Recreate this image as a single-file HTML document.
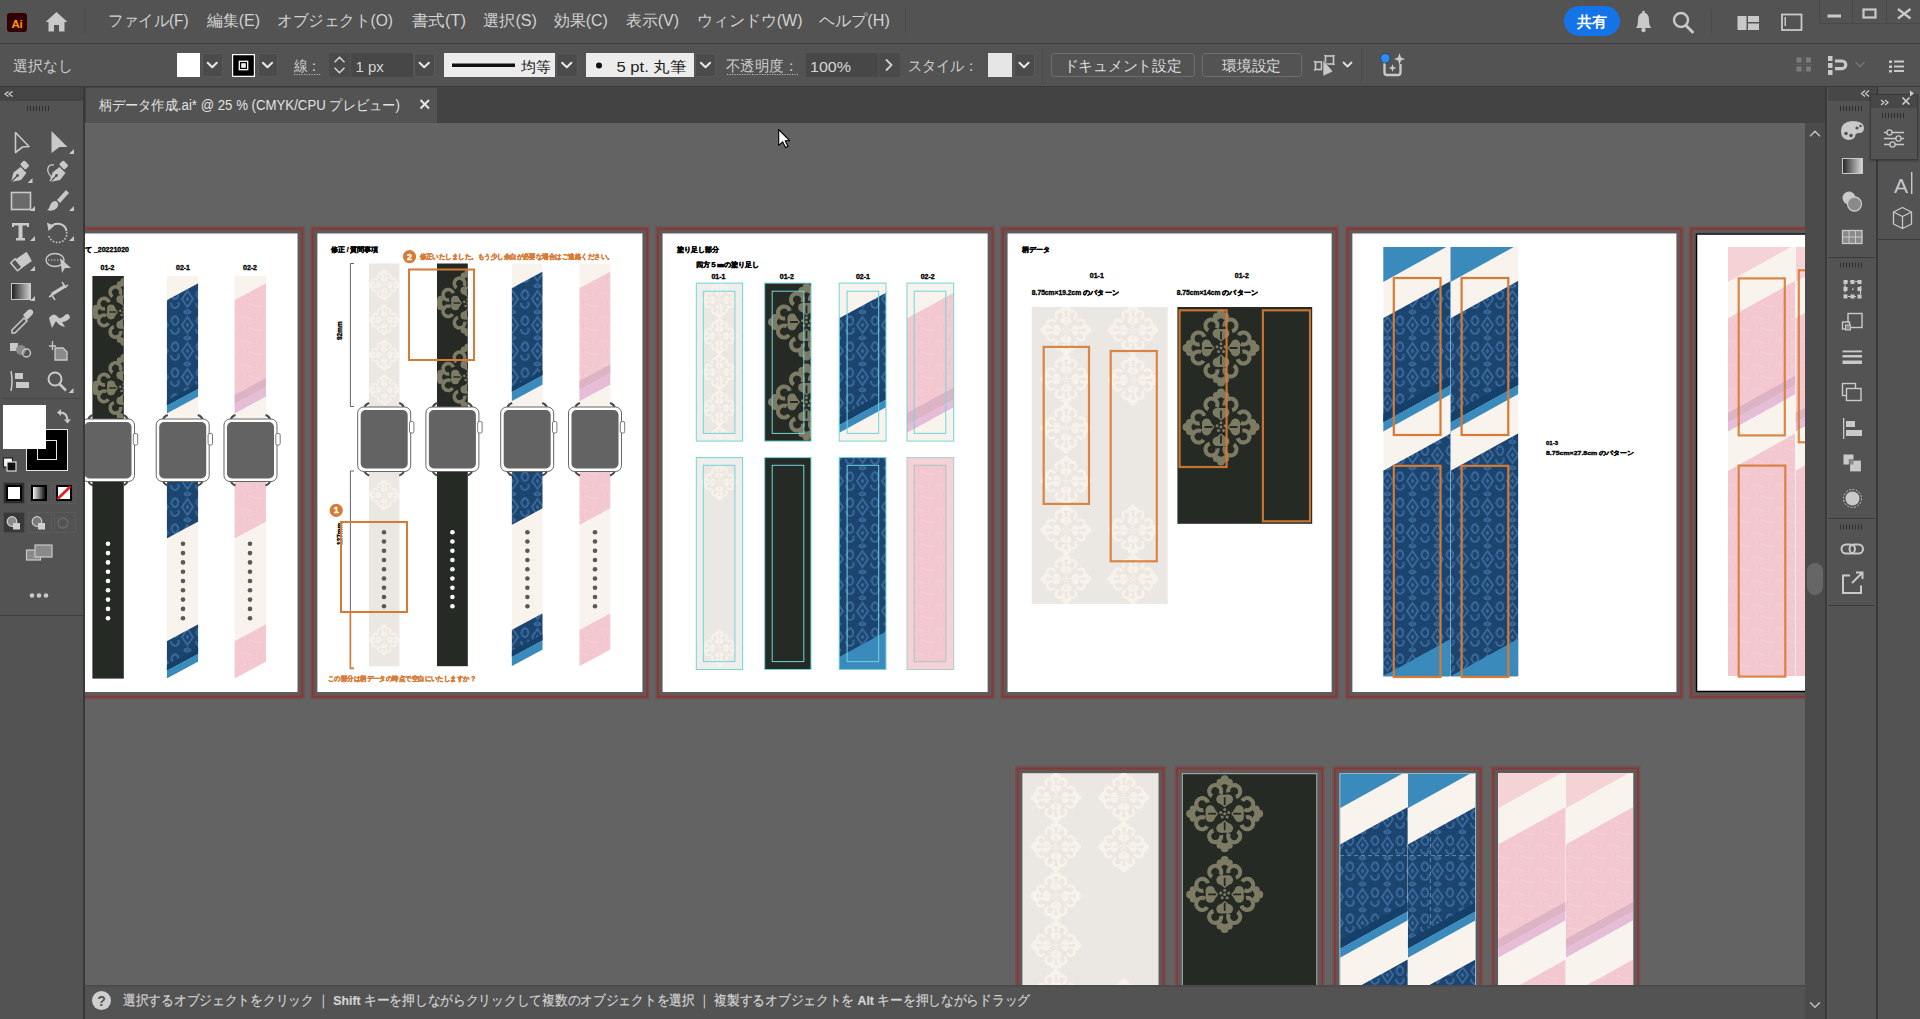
<!DOCTYPE html>
<html><head><meta charset="utf-8">
<style>
*{margin:0;padding:0;box-sizing:border-box}
html,body{width:1920px;height:1019px;overflow:hidden;background:#535353;font-family:"Liberation Sans",sans-serif}
.a{position:absolute}
.t{white-space:nowrap;line-height:1}
svg{overflow:hidden}
</style></head><body>
<div class="a" style="left:0px;top:0px;width:1920px;height:1019px;background:#535353;"></div>
<div class="a" style="left:0px;top:43px;width:1920px;height:1px;background:#3f3f3f;"></div>
<div class="a" style="left:0px;top:86px;width:1920px;height:1px;background:#3a3a3a;"></div>
<div class="a" style="left:85px;top:87px;width:1740px;height:36px;background:#434343;"></div>
<div class="a" style="left:86px;top:88px;width:351px;height:35px;background:#535353;"></div>
<div class="a" style="left:0px;top:87px;width:83px;height:14px;background:#454545;"></div>
<div class="a" style="left:0px;top:101px;width:83px;height:918px;background:#535353;"></div>
<div class="a" style="left:83px;top:87px;width:2px;height:932px;background:#393939;"></div>
<div class="a" style="left:85px;top:123px;width:1720px;height:862px;background:#636363;"></div>
<div class="a" style="left:1805px;top:123px;width:20px;height:896px;background:#4b4b4b;"></div>
<div class="a" style="left:1807px;top:563px;width:16px;height:32px;background:#666666;border-radius:8px"></div>
<div class="a" style="left:85px;top:985px;width:1720px;height:34px;background:#535353;"></div>
<div class="a" style="left:85px;top:985px;width:1720px;height:2px;background:#4b4b4b;"></div>
<div class="a" style="left:1825px;top:87px;width:2px;height:932px;background:#393939;"></div>
<div class="a" style="left:1827px;top:87px;width:1px;height:932px;background:#5a5a5a;"></div>
<div class="a" style="left:1828px;top:87px;width:47px;height:14px;background:#474747;"></div>
<div class="a" style="left:1828px;top:101px;width:47px;height:918px;background:#535353;"></div>
<div class="a" style="left:1875.5px;top:87px;width:2px;height:932px;background:#393939;"></div>
<div class="a" style="left:1878px;top:87px;width:42px;height:932px;background:#535353;"></div>
<svg class="a" style="left:85px;top:123px" width="1720" height="862" viewBox="85 123 1720 862" font-family="Liberation Sans, sans-serif"><defs>
<pattern id="navyPat" width="25" height="26" patternUnits="userSpaceOnUse"><rect width="25" height="26" fill="#1b446f"/><g fill="none" stroke="#38679a" stroke-width="2"><path d="M12.5 5 L18 13 L12.5 21 L7 13Z"/><path d="M0 4 q4 2 3 6 q-1 3 -3 3 M25 4 q-4 2 -3 6 q1 3 3 3"/><path d="M0 22 q4 -1 4 -5 M25 22 q-4 -1 -4 -5"/><path d="M9 0 q3 3 7 0 M9 26 q3 -3 7 0"/></g><path d="M12.5 10.5 L14.5 13 L12.5 15.5 L10.5 13Z" fill="#38679a"/><circle cx="3.5" cy="17" r="1.6" fill="#2f5d8c"/><circle cx="21.5" cy="9" r="1.6" fill="#2f5d8c"/><rect x="11.5" y="23" width="2" height="2" fill="#2f5d8c"/></pattern>
<pattern id="pinkPat" width="24" height="24" patternUnits="userSpaceOnUse"><rect width="24" height="24" fill="#f3c8d0"/><path d="M2 6 q4 -3 8 0 t8 1 M4 17 q5 -3 9 0 t9 0" fill="none" stroke="#f6d2d8" stroke-width="1"/><path d="M14 2 q-2 4 1 7 M7 12 q2 3 -1 6" fill="none" stroke="#eec0c9" stroke-width="0.9"/></pattern>
<g id="oliveM" fill="#7d7b63"><g transform="scale(1.000)"><g transform="rotate(0)"><circle cx="0" cy="-34.5" r="4"/><circle cx="-4.6" cy="-31.5" r="3.5"/><circle cx="4.6" cy="-31.5" r="3.5"/><rect x="-4.6" y="-33" width="9.2" height="3.5"/></g><g transform="rotate(90)"><circle cx="0" cy="-34.5" r="4"/><circle cx="-4.6" cy="-31.5" r="3.5"/><circle cx="4.6" cy="-31.5" r="3.5"/><rect x="-4.6" y="-33" width="9.2" height="3.5"/></g><g transform="rotate(180)"><circle cx="0" cy="-34.5" r="4"/><circle cx="-4.6" cy="-31.5" r="3.5"/><circle cx="4.6" cy="-31.5" r="3.5"/><rect x="-4.6" y="-33" width="9.2" height="3.5"/></g><g transform="rotate(270)"><circle cx="0" cy="-34.5" r="4"/><circle cx="-4.6" cy="-31.5" r="3.5"/><circle cx="4.6" cy="-31.5" r="3.5"/><rect x="-4.6" y="-33" width="9.2" height="3.5"/></g><g transform="rotate(0)"><circle cx="-3.8" cy="-14.5" r="4.6"/><circle cx="3.8" cy="-14.5" r="4.6"/><path d="M-8 -12.5 L0 -6.5 L8 -12.5Z"/><rect x="-3.8" y="-19" width="7.6" height="4"/><path d="M-0.9 -16.5 h1.8 v8 h-1.8z" fill="#252a25"/></g><g transform="rotate(90)"><circle cx="-3.8" cy="-14.5" r="4.6"/><circle cx="3.8" cy="-14.5" r="4.6"/><path d="M-8 -12.5 L0 -6.5 L8 -12.5Z"/><rect x="-3.8" y="-19" width="7.6" height="4"/><path d="M-0.9 -16.5 h1.8 v8 h-1.8z" fill="#252a25"/></g><g transform="rotate(180)"><circle cx="-3.8" cy="-14.5" r="4.6"/><circle cx="3.8" cy="-14.5" r="4.6"/><path d="M-8 -12.5 L0 -6.5 L8 -12.5Z"/><rect x="-3.8" y="-19" width="7.6" height="4"/><path d="M-0.9 -16.5 h1.8 v8 h-1.8z" fill="#252a25"/></g><g transform="rotate(270)"><circle cx="-3.8" cy="-14.5" r="4.6"/><circle cx="3.8" cy="-14.5" r="4.6"/><path d="M-8 -12.5 L0 -6.5 L8 -12.5Z"/><rect x="-3.8" y="-19" width="7.6" height="4"/><path d="M-0.9 -16.5 h1.8 v8 h-1.8z" fill="#252a25"/></g><g transform="rotate(0)"><circle cx="-9.5" cy="-22.5" r="6" fill="none" stroke="#7d7b63" stroke-width="4.2" stroke-dasharray="27 10.7" transform="rotate(-236.9 -9.5 -22.5)"/></g><g transform="rotate(0)"><circle cx="9.5" cy="-22.5" r="6" fill="none" stroke="#7d7b63" stroke-width="4.2" stroke-dasharray="27 10.7" transform="rotate(-191.1 9.5 -22.5)"/></g><g transform="rotate(90)"><circle cx="-9.5" cy="-22.5" r="6" fill="none" stroke="#7d7b63" stroke-width="4.2" stroke-dasharray="27 10.7" transform="rotate(-236.9 -9.5 -22.5)"/></g><g transform="rotate(90)"><circle cx="9.5" cy="-22.5" r="6" fill="none" stroke="#7d7b63" stroke-width="4.2" stroke-dasharray="27 10.7" transform="rotate(-191.1 9.5 -22.5)"/></g><g transform="rotate(180)"><circle cx="-9.5" cy="-22.5" r="6" fill="none" stroke="#7d7b63" stroke-width="4.2" stroke-dasharray="27 10.7" transform="rotate(-236.9 -9.5 -22.5)"/></g><g transform="rotate(180)"><circle cx="9.5" cy="-22.5" r="6" fill="none" stroke="#7d7b63" stroke-width="4.2" stroke-dasharray="27 10.7" transform="rotate(-191.1 9.5 -22.5)"/></g><g transform="rotate(270)"><circle cx="-9.5" cy="-22.5" r="6" fill="none" stroke="#7d7b63" stroke-width="4.2" stroke-dasharray="27 10.7" transform="rotate(-236.9 -9.5 -22.5)"/></g><g transform="rotate(270)"><circle cx="9.5" cy="-22.5" r="6" fill="none" stroke="#7d7b63" stroke-width="4.2" stroke-dasharray="27 10.7" transform="rotate(-191.1 9.5 -22.5)"/></g><circle cx="0.0" cy="-4.2" r="1.5"/><circle cx="4.0" cy="-1.3" r="1.5"/><circle cx="2.5" cy="3.4" r="1.5"/><circle cx="-2.5" cy="3.4" r="1.5"/><circle cx="-4.0" cy="-1.3" r="1.5"/><circle cx="0" cy="0" r="1.5"/></g></g>
<g id="creamM" fill="#f8f3ea"><g transform="scale(0.660)"><g transform="rotate(0)"><circle cx="0" cy="-34.5" r="4"/><circle cx="-4.6" cy="-31.5" r="3.5"/><circle cx="4.6" cy="-31.5" r="3.5"/><rect x="-4.6" y="-33" width="9.2" height="3.5"/></g><g transform="rotate(90)"><circle cx="0" cy="-34.5" r="4"/><circle cx="-4.6" cy="-31.5" r="3.5"/><circle cx="4.6" cy="-31.5" r="3.5"/><rect x="-4.6" y="-33" width="9.2" height="3.5"/></g><g transform="rotate(180)"><circle cx="0" cy="-34.5" r="4"/><circle cx="-4.6" cy="-31.5" r="3.5"/><circle cx="4.6" cy="-31.5" r="3.5"/><rect x="-4.6" y="-33" width="9.2" height="3.5"/></g><g transform="rotate(270)"><circle cx="0" cy="-34.5" r="4"/><circle cx="-4.6" cy="-31.5" r="3.5"/><circle cx="4.6" cy="-31.5" r="3.5"/><rect x="-4.6" y="-33" width="9.2" height="3.5"/></g><g transform="rotate(0)"><circle cx="-3.8" cy="-14.5" r="4.6"/><circle cx="3.8" cy="-14.5" r="4.6"/><path d="M-8 -12.5 L0 -6.5 L8 -12.5Z"/><rect x="-3.8" y="-19" width="7.6" height="4"/><path d="M-0.9 -16.5 h1.8 v8 h-1.8z" fill="#ebe7e2"/></g><g transform="rotate(90)"><circle cx="-3.8" cy="-14.5" r="4.6"/><circle cx="3.8" cy="-14.5" r="4.6"/><path d="M-8 -12.5 L0 -6.5 L8 -12.5Z"/><rect x="-3.8" y="-19" width="7.6" height="4"/><path d="M-0.9 -16.5 h1.8 v8 h-1.8z" fill="#ebe7e2"/></g><g transform="rotate(180)"><circle cx="-3.8" cy="-14.5" r="4.6"/><circle cx="3.8" cy="-14.5" r="4.6"/><path d="M-8 -12.5 L0 -6.5 L8 -12.5Z"/><rect x="-3.8" y="-19" width="7.6" height="4"/><path d="M-0.9 -16.5 h1.8 v8 h-1.8z" fill="#ebe7e2"/></g><g transform="rotate(270)"><circle cx="-3.8" cy="-14.5" r="4.6"/><circle cx="3.8" cy="-14.5" r="4.6"/><path d="M-8 -12.5 L0 -6.5 L8 -12.5Z"/><rect x="-3.8" y="-19" width="7.6" height="4"/><path d="M-0.9 -16.5 h1.8 v8 h-1.8z" fill="#ebe7e2"/></g><g transform="rotate(0)"><circle cx="-9.5" cy="-22.5" r="6" fill="none" stroke="#f8f3ea" stroke-width="4.2" stroke-dasharray="27 10.7" transform="rotate(-236.9 -9.5 -22.5)"/></g><g transform="rotate(0)"><circle cx="9.5" cy="-22.5" r="6" fill="none" stroke="#f8f3ea" stroke-width="4.2" stroke-dasharray="27 10.7" transform="rotate(-191.1 9.5 -22.5)"/></g><g transform="rotate(90)"><circle cx="-9.5" cy="-22.5" r="6" fill="none" stroke="#f8f3ea" stroke-width="4.2" stroke-dasharray="27 10.7" transform="rotate(-236.9 -9.5 -22.5)"/></g><g transform="rotate(90)"><circle cx="9.5" cy="-22.5" r="6" fill="none" stroke="#f8f3ea" stroke-width="4.2" stroke-dasharray="27 10.7" transform="rotate(-191.1 9.5 -22.5)"/></g><g transform="rotate(180)"><circle cx="-9.5" cy="-22.5" r="6" fill="none" stroke="#f8f3ea" stroke-width="4.2" stroke-dasharray="27 10.7" transform="rotate(-236.9 -9.5 -22.5)"/></g><g transform="rotate(180)"><circle cx="9.5" cy="-22.5" r="6" fill="none" stroke="#f8f3ea" stroke-width="4.2" stroke-dasharray="27 10.7" transform="rotate(-191.1 9.5 -22.5)"/></g><g transform="rotate(270)"><circle cx="-9.5" cy="-22.5" r="6" fill="none" stroke="#f8f3ea" stroke-width="4.2" stroke-dasharray="27 10.7" transform="rotate(-236.9 -9.5 -22.5)"/></g><g transform="rotate(270)"><circle cx="9.5" cy="-22.5" r="6" fill="none" stroke="#f8f3ea" stroke-width="4.2" stroke-dasharray="27 10.7" transform="rotate(-191.1 9.5 -22.5)"/></g><circle cx="0.0" cy="-4.2" r="1.5"/><circle cx="4.0" cy="-1.3" r="1.5"/><circle cx="2.5" cy="3.4" r="1.5"/><circle cx="-2.5" cy="3.4" r="1.5"/><circle cx="-4.0" cy="-1.3" r="1.5"/><circle cx="0" cy="0" r="1.5"/></g></g>
</defs>
<rect x="-31.8" y="228.7" width="334.1" height="468.1" fill="none" stroke="#7a4646" stroke-width="5" opacity="0.55"/>
<rect x="-31.8" y="228.7" width="334.1" height="468.1" fill="none" stroke="#863838" stroke-width="1.8"/>
<rect x="-28.6" y="231.9" width="327.7" height="461.7" fill="none" stroke="#585858" stroke-width="2.2" opacity="0.7"/>
<rect x="-27.0" y="233.5" width="324.5" height="458.5" fill="#ffffff"/>
<rect x="312.6" y="228.7" width="334.6" height="468.1" fill="none" stroke="#7a4646" stroke-width="5" opacity="0.55"/>
<rect x="312.6" y="228.7" width="334.6" height="468.1" fill="none" stroke="#863838" stroke-width="1.8"/>
<rect x="315.8" y="231.9" width="328.2" height="461.7" fill="none" stroke="#585858" stroke-width="2.2" opacity="0.7"/>
<rect x="317.4" y="233.5" width="325.0" height="458.5" fill="#ffffff"/>
<rect x="657.8" y="228.7" width="334.6" height="468.1" fill="none" stroke="#7a4646" stroke-width="5" opacity="0.55"/>
<rect x="657.8" y="228.7" width="334.6" height="468.1" fill="none" stroke="#863838" stroke-width="1.8"/>
<rect x="661.0" y="231.9" width="328.2" height="461.7" fill="none" stroke="#585858" stroke-width="2.2" opacity="0.7"/>
<rect x="662.6" y="233.5" width="325.0" height="458.5" fill="#ffffff"/>
<rect x="1002.8" y="228.7" width="333.6" height="468.1" fill="none" stroke="#7a4646" stroke-width="5" opacity="0.55"/>
<rect x="1002.8" y="228.7" width="333.6" height="468.1" fill="none" stroke="#863838" stroke-width="1.8"/>
<rect x="1006.0" y="231.9" width="327.2" height="461.7" fill="none" stroke="#585858" stroke-width="2.2" opacity="0.7"/>
<rect x="1007.6" y="233.5" width="324.0" height="458.5" fill="#ffffff"/>
<rect x="1347.6" y="228.7" width="333.6" height="468.1" fill="none" stroke="#7a4646" stroke-width="5" opacity="0.55"/>
<rect x="1347.6" y="228.7" width="333.6" height="468.1" fill="none" stroke="#863838" stroke-width="1.8"/>
<rect x="1350.8" y="231.9" width="327.2" height="461.7" fill="none" stroke="#585858" stroke-width="2.2" opacity="0.7"/>
<rect x="1352.4" y="233.5" width="324.0" height="458.5" fill="#ffffff"/>
<rect x="1691.2" y="228.7" width="333.6" height="468.1" fill="none" stroke="#7a4646" stroke-width="5" opacity="0.55"/>
<rect x="1691.2" y="228.7" width="333.6" height="468.1" fill="none" stroke="#863838" stroke-width="1.8"/>
<rect x="1694.4" y="231.9" width="327.2" height="461.7" fill="none" stroke="#585858" stroke-width="2.2" opacity="0.7"/>
<rect x="1696.0" y="233.5" width="324.0" height="458.5" fill="#ffffff"/>
<rect x="1696.5" y="234.0" width="323.0" height="457.5" fill="none" stroke="#000" stroke-width="1.5"/>
<text x="85.0" y="252.0" font-size="7" fill="#000" text-anchor="start" font-weight="bold" stroke="#000" stroke-width="0.35">て _20221020</text>
<text x="107.5" y="270.0" font-size="7" fill="#000" text-anchor="middle" font-weight="bold" stroke="#000" stroke-width="0.35">01-2</text>
<text x="183.0" y="270.0" font-size="7" fill="#000" text-anchor="middle" font-weight="bold" stroke="#000" stroke-width="0.35">02-1</text>
<text x="250.0" y="270.0" font-size="7" fill="#000" text-anchor="middle" font-weight="bold" stroke="#000" stroke-width="0.35">02-2</text>
<rect x="92.4" y="276.0" width="31.4" height="402.6" fill="#252a25"/>
<clipPath id="s1c"><rect x="92.4" y="276" width="31.4" height="142"/></clipPath><g clip-path="url(#s1c)">
<use href="#oliveM" transform="translate(123.8 312.0) scale(0.880)"/>
<use href="#oliveM" transform="translate(123.8 388.0) scale(0.880)"/>
</g>
<circle cx="108.0" cy="543.8" r="2.3" fill="#ffffff"/>
<circle cx="108.0" cy="553.1" r="2.3" fill="#ffffff"/>
<circle cx="108.0" cy="562.4" r="2.3" fill="#ffffff"/>
<circle cx="108.0" cy="571.7" r="2.3" fill="#ffffff"/>
<circle cx="108.0" cy="581.0" r="2.3" fill="#ffffff"/>
<circle cx="108.0" cy="590.3" r="2.3" fill="#ffffff"/>
<circle cx="108.0" cy="599.6" r="2.3" fill="#ffffff"/>
<circle cx="108.0" cy="608.9" r="2.3" fill="#ffffff"/>
<circle cx="108.0" cy="618.2" r="2.3" fill="#ffffff"/>
<clipPath id="c1"><polygon points="166.7,276.0 198.3,276.0 198.3,661.6 166.7,678.6"/></clipPath>
<g clip-path="url(#c1)">
<rect x="166.7" y="276.0" width="31.6" height="402.6" fill="#f8f4ed"/>
<polygon points="166.7,300.3 198.3,283.3 198.3,388.7 166.7,405.7" fill="url(#navyPat)"/>
<polygon points="166.7,400.7 198.3,383.7 198.3,388.7 166.7,405.7" fill="#15406a"/>
<polygon points="166.7,405.7 198.3,388.7 198.3,396.6 166.7,413.6" fill="#3a8abb"/>
<polygon points="166.7,478.0 198.3,461.0 198.3,521.6 166.7,538.6" fill="url(#navyPat)"/>
<polygon points="166.7,641.3 198.3,624.3 198.3,653.7 166.7,670.7" fill="url(#navyPat)"/>
<polygon points="166.7,664.7 198.3,647.7 198.3,653.7 166.7,670.7" fill="#15406a"/>
<polygon points="166.7,670.7 198.3,653.7 198.3,701.6 166.7,718.6" fill="#3a8abb"/>
</g>
<clipPath id="c2"><polygon points="234.4,276.0 266.0,276.0 266.0,661.6 234.4,678.6"/></clipPath>
<g clip-path="url(#c2)">
<rect x="234.4" y="276.0" width="31.6" height="402.6" fill="#f8f4ed"/>
<polygon points="234.4,300.3 266.0,283.3 266.0,387.0 234.4,404.0" fill="url(#pinkPat)"/>
<polygon points="234.4,395.0 266.0,378.0 266.0,387.0 234.4,404.0" fill="#dcb4c6"/>
<polygon points="234.4,404.0 266.0,387.0 266.0,396.6 234.4,413.6" fill="#e6bdd6"/>
<polygon points="234.4,478.0 266.0,461.0 266.0,521.6 234.4,538.6" fill="url(#pinkPat)"/>
<polygon points="234.4,641.3 266.0,624.3 266.0,701.6 234.4,718.6" fill="url(#pinkPat)"/>
</g>
<circle cx="183.0" cy="543.8" r="2.3" fill="#5d5853"/>
<circle cx="183.0" cy="553.1" r="2.3" fill="#5d5853"/>
<circle cx="183.0" cy="562.4" r="2.3" fill="#5d5853"/>
<circle cx="183.0" cy="571.7" r="2.3" fill="#5d5853"/>
<circle cx="183.0" cy="581.0" r="2.3" fill="#5d5853"/>
<circle cx="183.0" cy="590.3" r="2.3" fill="#5d5853"/>
<circle cx="183.0" cy="599.6" r="2.3" fill="#5d5853"/>
<circle cx="183.0" cy="608.9" r="2.3" fill="#5d5853"/>
<circle cx="183.0" cy="618.2" r="2.3" fill="#5d5853"/>
<circle cx="250.0" cy="543.8" r="2.3" fill="#5d5853"/>
<circle cx="250.0" cy="553.1" r="2.3" fill="#5d5853"/>
<circle cx="250.0" cy="562.4" r="2.3" fill="#5d5853"/>
<circle cx="250.0" cy="571.7" r="2.3" fill="#5d5853"/>
<circle cx="250.0" cy="581.0" r="2.3" fill="#5d5853"/>
<circle cx="250.0" cy="590.3" r="2.3" fill="#5d5853"/>
<circle cx="250.0" cy="599.6" r="2.3" fill="#5d5853"/>
<circle cx="250.0" cy="608.9" r="2.3" fill="#5d5853"/>
<circle cx="250.0" cy="618.2" r="2.3" fill="#5d5853"/>
<path d="M88.0 421.0 q0.5 -4.5 5 -6 M128.0 421.0 q-0.5 -4.5 -5 -6" stroke="#4a4a4a" stroke-width="2.2" fill="none"/>
<path d="M88.0 479.5 q0.5 4.5 5 6 M128.0 479.5 q-0.5 4.5 -5 6" stroke="#4a4a4a" stroke-width="2.2" fill="none"/>
<rect x="81.5" y="419.0" width="53.0" height="62.5" rx="6" fill="#fff" stroke="#666" stroke-width="1"/>
<rect x="133.3" y="433.5" width="4.4" height="11.5" rx="1.5" fill="#fff" stroke="#6a6a6a" stroke-width="0.9"/>
<rect x="84.5" y="422.0" width="47.0" height="56.5" rx="5" fill="#636363"/>
<path d="M162.8 421.0 q0.5 -4.5 5 -6 M202.8 421.0 q-0.5 -4.5 -5 -6" stroke="#4a4a4a" stroke-width="2.2" fill="none"/>
<path d="M162.8 479.5 q0.5 4.5 5 6 M202.8 479.5 q-0.5 4.5 -5 6" stroke="#4a4a4a" stroke-width="2.2" fill="none"/>
<rect x="156.2" y="419.0" width="53.0" height="62.5" rx="6" fill="#fff" stroke="#666" stroke-width="1"/>
<rect x="208.1" y="433.5" width="4.4" height="11.5" rx="1.5" fill="#fff" stroke="#6a6a6a" stroke-width="0.9"/>
<rect x="159.2" y="422.0" width="47.0" height="56.5" rx="5" fill="#636363"/>
<path d="M230.5 421.0 q0.5 -4.5 5 -6 M270.5 421.0 q-0.5 -4.5 -5 -6" stroke="#4a4a4a" stroke-width="2.2" fill="none"/>
<path d="M230.5 479.5 q0.5 4.5 5 6 M270.5 479.5 q-0.5 4.5 -5 6" stroke="#4a4a4a" stroke-width="2.2" fill="none"/>
<rect x="224.0" y="419.0" width="53.0" height="62.5" rx="6" fill="#fff" stroke="#666" stroke-width="1"/>
<rect x="275.8" y="433.5" width="4.4" height="11.5" rx="1.5" fill="#fff" stroke="#6a6a6a" stroke-width="0.9"/>
<rect x="227.0" y="422.0" width="47.0" height="56.5" rx="5" fill="#636363"/>
<text x="331.0" y="252.0" font-size="6.5" fill="#000" text-anchor="start" font-weight="bold" stroke="#000" stroke-width="0.35">修正 / 質問事項</text>
<circle cx="409.5" cy="256.7" r="6.6" fill="#d77a35"/>
<text x="409.5" y="259.6" font-size="9" fill="#fff" text-anchor="middle" font-weight="bold" stroke="#fff" stroke-width="0.35">2</text>
<text x="419.5" y="258.5" font-size="6.6" fill="#d77a35" text-anchor="start" font-weight="bold" stroke="#d77a35" stroke-width="0.35" textLength="194" lengthAdjust="spacingAndGlyphs">修正いたしました。もう少し余白が必要な場合はご連絡ください。</text>
<path d="M354 263.5 H350.4 V406.5 H354" fill="none" stroke="#555" stroke-width="0.9"/>
<path d="M354 471 H350.4 V668.4 H354" fill="none" stroke="#555" stroke-width="0.9"/>
<path d="M350.4 612 V668.4 H354" fill="none" stroke="#d77a35" stroke-width="1.6"/>
<text x="341.5" y="340.0" font-size="6.5" fill="#000" text-anchor="start" font-weight="bold" stroke="#000" stroke-width="0.35" transform="rotate(-90 341.5 340)" text-anchor="middle">92mm</text>
<text x="341.5" y="545.0" font-size="6.5" fill="#000" text-anchor="start" font-weight="bold" stroke="#000" stroke-width="0.35" transform="rotate(-90 341.5 545)" text-anchor="middle">127mm</text>
<rect x="369.0" y="263.5" width="30.4" height="402.7" fill="#ebe7e2"/>
<clipPath id="s2a"><rect x="369" y="263.5" width="30.4" height="402.7"/></clipPath><g clip-path="url(#s2a)">
<use href="#creamM" transform="translate(384.2 285.0) scale(0.620)"/>
<use href="#creamM" transform="translate(384.2 320.0) scale(0.620)"/>
<use href="#creamM" transform="translate(384.2 355.0) scale(0.620)"/>
<use href="#creamM" transform="translate(384.2 390.0) scale(0.620)"/>
<use href="#creamM" transform="translate(384.2 495.0) scale(0.620)"/>
<use href="#creamM" transform="translate(384.2 640.0) scale(0.620)"/>
</g>
<rect x="437.0" y="263.5" width="30.8" height="402.7" fill="#252a25"/>
<clipPath id="s2b"><rect x="437" y="263.5" width="30.8" height="143"/></clipPath><g clip-path="url(#s2b)">
<use href="#oliveM" transform="translate(467.8 303.0) scale(0.870)"/>
<use href="#oliveM" transform="translate(467.8 377.0) scale(0.870)"/>
</g>
<clipPath id="c3"><polygon points="511.6,263.5 542.7,263.5 542.7,649.5 511.6,666.2"/></clipPath>
<g clip-path="url(#c3)">
<rect x="511.6" y="263.5" width="31.1" height="402.7" fill="#f8f4ed"/>
<polygon points="511.6,288.3 542.7,271.6 542.7,375.3 511.6,392.0" fill="url(#navyPat)"/>
<polygon points="511.6,387.0 542.7,370.3 542.7,375.3 511.6,392.0" fill="#15406a"/>
<polygon points="511.6,392.0 542.7,375.3 542.7,384.5 511.6,401.2" fill="#3a8abb"/>
<polygon points="511.6,468.0 542.7,451.3 542.7,508.3 511.6,525.0" fill="url(#navyPat)"/>
<polygon points="511.6,630.0 542.7,613.3 542.7,640.3 511.6,657.0" fill="url(#navyPat)"/>
<polygon points="511.6,651.0 542.7,634.3 542.7,640.3 511.6,657.0" fill="#15406a"/>
<polygon points="511.6,657.0 542.7,640.3 542.7,689.5 511.6,706.2" fill="#3a8abb"/>
</g>
<clipPath id="c4"><polygon points="579.3,263.5 610.5,263.5 610.5,649.4 579.3,666.2"/></clipPath>
<g clip-path="url(#c4)">
<rect x="579.3" y="263.5" width="31.2" height="402.7" fill="#f8f4ed"/>
<polygon points="579.3,288.3 610.5,271.5 610.5,373.2 579.3,390.0" fill="url(#pinkPat)"/>
<polygon points="579.3,381.0 610.5,364.2 610.5,373.2 579.3,390.0" fill="#dcb4c6"/>
<polygon points="579.3,390.0 610.5,373.2 610.5,384.4 579.3,401.2" fill="#e6bdd6"/>
<polygon points="579.3,468.0 610.5,451.2 610.5,508.2 579.3,525.0" fill="url(#pinkPat)"/>
<polygon points="579.3,630.0 610.5,613.2 610.5,689.4 579.3,706.2" fill="url(#pinkPat)"/>
</g>
<circle cx="384.0" cy="532.3" r="2.3" fill="#5d5853"/>
<circle cx="384.0" cy="541.5" r="2.3" fill="#5d5853"/>
<circle cx="384.0" cy="550.8" r="2.3" fill="#5d5853"/>
<circle cx="384.0" cy="560.0" r="2.3" fill="#5d5853"/>
<circle cx="384.0" cy="569.3" r="2.3" fill="#5d5853"/>
<circle cx="384.0" cy="578.5" r="2.3" fill="#5d5853"/>
<circle cx="384.0" cy="587.8" r="2.3" fill="#5d5853"/>
<circle cx="384.0" cy="597.0" r="2.3" fill="#5d5853"/>
<circle cx="384.0" cy="606.3" r="2.3" fill="#5d5853"/>
<circle cx="452.4" cy="532.3" r="2.3" fill="#ffffff"/>
<circle cx="452.4" cy="541.5" r="2.3" fill="#ffffff"/>
<circle cx="452.4" cy="550.8" r="2.3" fill="#ffffff"/>
<circle cx="452.4" cy="560.0" r="2.3" fill="#ffffff"/>
<circle cx="452.4" cy="569.3" r="2.3" fill="#ffffff"/>
<circle cx="452.4" cy="578.5" r="2.3" fill="#ffffff"/>
<circle cx="452.4" cy="587.8" r="2.3" fill="#ffffff"/>
<circle cx="452.4" cy="597.0" r="2.3" fill="#ffffff"/>
<circle cx="452.4" cy="606.3" r="2.3" fill="#ffffff"/>
<circle cx="527.4" cy="532.3" r="2.3" fill="#5d5853"/>
<circle cx="527.4" cy="541.5" r="2.3" fill="#5d5853"/>
<circle cx="527.4" cy="550.8" r="2.3" fill="#5d5853"/>
<circle cx="527.4" cy="560.0" r="2.3" fill="#5d5853"/>
<circle cx="527.4" cy="569.3" r="2.3" fill="#5d5853"/>
<circle cx="527.4" cy="578.5" r="2.3" fill="#5d5853"/>
<circle cx="527.4" cy="587.8" r="2.3" fill="#5d5853"/>
<circle cx="527.4" cy="597.0" r="2.3" fill="#5d5853"/>
<circle cx="527.4" cy="606.3" r="2.3" fill="#5d5853"/>
<circle cx="595.0" cy="532.3" r="2.3" fill="#5d5853"/>
<circle cx="595.0" cy="541.5" r="2.3" fill="#5d5853"/>
<circle cx="595.0" cy="550.8" r="2.3" fill="#5d5853"/>
<circle cx="595.0" cy="560.0" r="2.3" fill="#5d5853"/>
<circle cx="595.0" cy="569.3" r="2.3" fill="#5d5853"/>
<circle cx="595.0" cy="578.5" r="2.3" fill="#5d5853"/>
<circle cx="595.0" cy="587.8" r="2.3" fill="#5d5853"/>
<circle cx="595.0" cy="597.0" r="2.3" fill="#5d5853"/>
<circle cx="595.0" cy="606.3" r="2.3" fill="#5d5853"/>
<path d="M364.2 409.0 q0.5 -4.5 5 -6 M404.2 409.0 q-0.5 -4.5 -5 -6" stroke="#4a4a4a" stroke-width="2.2" fill="none"/>
<path d="M364.2 469.5 q0.5 4.5 5 6 M404.2 469.5 q-0.5 4.5 -5 6" stroke="#4a4a4a" stroke-width="2.2" fill="none"/>
<rect x="357.7" y="407.0" width="53.0" height="64.5" rx="6" fill="#fff" stroke="#666" stroke-width="1"/>
<rect x="409.5" y="421.5" width="4.4" height="11.5" rx="1.5" fill="#fff" stroke="#6a6a6a" stroke-width="0.9"/>
<rect x="360.7" y="410.0" width="47.0" height="58.5" rx="5" fill="#636363"/>
<path d="M432.4 409.0 q0.5 -4.5 5 -6 M472.4 409.0 q-0.5 -4.5 -5 -6" stroke="#4a4a4a" stroke-width="2.2" fill="none"/>
<path d="M432.4 469.5 q0.5 4.5 5 6 M472.4 469.5 q-0.5 4.5 -5 6" stroke="#4a4a4a" stroke-width="2.2" fill="none"/>
<rect x="425.9" y="407.0" width="53.0" height="64.5" rx="6" fill="#fff" stroke="#666" stroke-width="1"/>
<rect x="477.7" y="421.5" width="4.4" height="11.5" rx="1.5" fill="#fff" stroke="#6a6a6a" stroke-width="0.9"/>
<rect x="428.9" y="410.0" width="47.0" height="58.5" rx="5" fill="#636363"/>
<path d="M507.2 409.0 q0.5 -4.5 5 -6 M547.2 409.0 q-0.5 -4.5 -5 -6" stroke="#4a4a4a" stroke-width="2.2" fill="none"/>
<path d="M507.2 469.5 q0.5 4.5 5 6 M547.2 469.5 q-0.5 4.5 -5 6" stroke="#4a4a4a" stroke-width="2.2" fill="none"/>
<rect x="500.7" y="407.0" width="53.0" height="64.5" rx="6" fill="#fff" stroke="#666" stroke-width="1"/>
<rect x="552.5" y="421.5" width="4.4" height="11.5" rx="1.5" fill="#fff" stroke="#6a6a6a" stroke-width="0.9"/>
<rect x="503.7" y="410.0" width="47.0" height="58.5" rx="5" fill="#636363"/>
<path d="M575.0 409.0 q0.5 -4.5 5 -6 M615.0 409.0 q-0.5 -4.5 -5 -6" stroke="#4a4a4a" stroke-width="2.2" fill="none"/>
<path d="M575.0 469.5 q0.5 4.5 5 6 M615.0 469.5 q-0.5 4.5 -5 6" stroke="#4a4a4a" stroke-width="2.2" fill="none"/>
<rect x="568.5" y="407.0" width="53.0" height="64.5" rx="6" fill="#fff" stroke="#666" stroke-width="1"/>
<rect x="620.3" y="421.5" width="4.4" height="11.5" rx="1.5" fill="#fff" stroke="#6a6a6a" stroke-width="0.9"/>
<rect x="571.5" y="410.0" width="47.0" height="58.5" rx="5" fill="#636363"/>
<rect x="409" y="269.5" width="65" height="90.5" fill="none" stroke="#d77a35" stroke-width="2"/>
<rect x="341" y="522" width="66" height="90" fill="none" stroke="#d77a35" stroke-width="2"/>
<circle cx="336.2" cy="510.4" r="6.6" fill="#d77a35"/>
<text x="336.2" y="513.4" font-size="9" fill="#fff" text-anchor="middle" font-weight="bold" stroke="#fff" stroke-width="0.35">1</text>
<text x="328.0" y="681.0" font-size="6.6" fill="#d77a35" text-anchor="start" font-weight="bold" stroke="#d77a35" stroke-width="0.35" textLength="148" lengthAdjust="spacingAndGlyphs">この部分は柄データの時点で空白にいたしますか？</text>
<text x="676.7" y="252.0" font-size="6.5" fill="#000" text-anchor="start" font-weight="bold" stroke="#000" stroke-width="0.35">塗り足し部分</text>
<text x="695.9" y="267.0" font-size="6.5" fill="#000" text-anchor="start" font-weight="bold" stroke="#000" stroke-width="0.35">四方５㎜の塗り足し</text>
<text x="718.4" y="279.0" font-size="7" fill="#000" text-anchor="middle" font-weight="bold" stroke="#000" stroke-width="0.35">01-1</text>
<text x="786.8" y="279.0" font-size="7" fill="#000" text-anchor="middle" font-weight="bold" stroke="#000" stroke-width="0.35">01-2</text>
<text x="862.9" y="279.0" font-size="7" fill="#000" text-anchor="middle" font-weight="bold" stroke="#000" stroke-width="0.35">02-1</text>
<text x="927.7" y="279.0" font-size="7" fill="#000" text-anchor="middle" font-weight="bold" stroke="#000" stroke-width="0.35">02-2</text>
<rect x="696.3" y="283.1" width="46.3" height="158.0" fill="#ebe7e2"/>
<clipPath id="s3a"><rect x="696.3" y="283.1" width="46.3" height="158"/></clipPath><g clip-path="url(#s3a)">
<use href="#creamM" transform="translate(719.4 300.0) scale(0.720)"/>
<use href="#creamM" transform="translate(719.4 336.0) scale(0.720)"/>
<use href="#creamM" transform="translate(719.4 372.0) scale(0.720)"/>
<use href="#creamM" transform="translate(719.4 408.0) scale(0.720)"/>
<use href="#creamM" transform="translate(719.4 444.0) scale(0.720)"/>
</g>
<path d="M696.3 283.1 h46.3 v158 h-46.3z M703.3 291.2 v142.2 h31.6 v-142.2z" fill="#f4f7f4" fill-opacity="0.45" fill-rule="evenodd"/>
<rect x="696.3" y="283.1" width="46.3" height="158.0" fill="none" stroke="#6ed6dc" stroke-width="1"/>
<rect x="703.3" y="291.2" width="31.6" height="142.2" fill="none" stroke="#6ed6dc" stroke-width="1"/>
<rect x="764.7" y="283.1" width="46.3" height="158.0" fill="#252a25"/>
<clipPath id="s3b"><rect x="764.7" y="283.1" width="46.3" height="158"/></clipPath><g clip-path="url(#s3b)">
<use href="#oliveM" transform="translate(806.5 322.0) scale(1.000)"/>
<use href="#oliveM" transform="translate(806.5 402.0) scale(1.000)"/>
</g>
<rect x="764.7" y="283.1" width="46.3" height="158.0" fill="none" stroke="#6ed6dc" stroke-width="1"/>
<rect x="772.2" y="291.2" width="31.6" height="142.2" fill="none" stroke="#6ed6dc" stroke-width="1"/>
<clipPath id="c5"><polygon points="839.2,283.1 886.0,283.1 886.0,441.1 839.2,441.1"/></clipPath>
<g clip-path="url(#c5)">
<rect x="839.2" y="283.1" width="46.8" height="158.0" fill="#f8f4ed"/>
<polygon points="839.2,318.3 886.0,292.8 886.0,399.4 839.2,424.9" fill="url(#navyPat)"/>
<polygon points="839.2,417.0 886.0,391.5 886.0,399.4 839.2,424.9" fill="#15406a"/>
<polygon points="839.2,424.9 886.0,399.4 886.0,407.3 839.2,432.8" fill="#3a8abb"/>
</g>
<rect x="839.2" y="283.1" width="46.8" height="158.0" fill="none" stroke="#6ed6dc" stroke-width="1"/>
<rect x="847.1" y="291.2" width="31.6" height="142.2" fill="none" stroke="#6ed6dc" stroke-width="1"/>
<clipPath id="c6"><polygon points="907.0,283.1 953.8,283.1 953.8,441.1 907.0,441.1"/></clipPath>
<g clip-path="url(#c6)">
<rect x="907.0" y="283.1" width="46.8" height="158.0" fill="#f8f4ed"/>
<polygon points="907.0,318.3 953.8,292.8 953.8,399.4 907.0,424.9" fill="url(#pinkPat)"/>
<polygon points="907.0,413.0 953.8,387.5 953.8,399.4 907.0,424.9" fill="#dcb4c6"/>
<polygon points="907.0,424.9 953.8,399.4 953.8,407.3 907.0,432.8" fill="#e6bdd6"/>
</g>
<rect x="907.0" y="283.1" width="46.7" height="158.0" fill="none" stroke="#6ed6dc" stroke-width="1"/>
<rect x="914.2" y="291.2" width="31.6" height="142.2" fill="none" stroke="#6ed6dc" stroke-width="1"/>
<rect x="696.3" y="457.6" width="46.3" height="212.0" fill="#ebe7e2"/>
<clipPath id="s3c"><rect x="696.3" y="457.6" width="46.3" height="212"/></clipPath><g clip-path="url(#s3c)">
<use href="#creamM" transform="translate(719.4 482.0) scale(0.720)"/>
<use href="#creamM" transform="translate(719.4 648.0) scale(0.720)"/>
</g>
<path d="M696.3 457.6 h46.3 v212 h-46.3z M703.3 465.3 v196.3 h31.6 v-196.3z" fill="#f4f7f4" fill-opacity="0.45" fill-rule="evenodd"/>
<rect x="696.3" y="457.6" width="46.3" height="211.9" fill="none" stroke="#6ed6dc" stroke-width="1"/>
<rect x="703.3" y="465.3" width="31.6" height="196.3" fill="none" stroke="#6ed6dc" stroke-width="1"/>
<rect x="764.7" y="457.6" width="46.3" height="212.0" fill="#252a25"/>
<rect x="764.7" y="457.6" width="46.3" height="211.9" fill="none" stroke="#6ed6dc" stroke-width="1"/>
<rect x="772.2" y="465.3" width="31.6" height="196.3" fill="none" stroke="#6ed6dc" stroke-width="1"/>
<clipPath id="c7"><polygon points="839.2,457.6 886.0,457.6 886.0,669.5 839.2,669.5"/></clipPath>
<g clip-path="url(#c7)">
<rect x="839.2" y="457.6" width="46.8" height="211.9" fill="#1c4772"/>
<polygon points="839.2,0.0 886.0,-25.5 886.0,631.5 839.2,657.0" fill="url(#navyPat)"/>
<polygon points="839.2,657.0 886.0,631.5 886.0,694.5 839.2,720.0" fill="#3a8abb"/>
</g>
<rect x="839.2" y="457.6" width="46.8" height="211.9" fill="none" stroke="#6ed6dc" stroke-width="1"/>
<rect x="847.1" y="465.3" width="31.6" height="196.3" fill="none" stroke="#6ed6dc" stroke-width="1"/>
<rect x="907.0" y="457.6" width="46.8" height="212.0" fill="#f4d2d6"/>
<rect x="914.2" y="465.3" width="31.6" height="196.3" fill="url(#pinkPat)"/>
<rect x="907" y="457.6" width="46.7" height="211.9" fill="none" stroke="#a9cdd2" stroke-width="1"/><rect x="914.2" y="465.3" width="31.6" height="196.3" fill="none" stroke="#b3c6ca" stroke-width="1.2"/>
<text x="1021.7" y="252.0" font-size="6.5" fill="#000" text-anchor="start" font-weight="bold" stroke="#000" stroke-width="0.35">柄データ</text>
<text x="1096.8" y="278.0" font-size="7" fill="#000" text-anchor="middle" font-weight="bold" stroke="#000" stroke-width="0.35">01-1</text>
<text x="1241.8" y="278.0" font-size="7" fill="#000" text-anchor="middle" font-weight="bold" stroke="#000" stroke-width="0.35">01-2</text>
<text x="1031.8" y="294.8" font-size="6.6" fill="#000" text-anchor="start" font-weight="bold" stroke="#000" stroke-width="0.35" textLength="87" lengthAdjust="spacingAndGlyphs">8.75cm×19.2cm のパターン</text>
<text x="1176.8" y="294.8" font-size="6.6" fill="#000" text-anchor="start" font-weight="bold" stroke="#000" stroke-width="0.35" textLength="81" lengthAdjust="spacingAndGlyphs">8.75cm×14cm のパターン</text>
<rect x="1031.8" y="307.0" width="135.9" height="297.0" fill="#ebe7e2"/>
<clipPath id="s4a"><rect x="1031.8" y="307" width="135.9" height="297"/></clipPath><g clip-path="url(#s4a)">
<use href="#creamM" transform="translate(1066.0 330.0) scale(1.000)"/>
<use href="#creamM" transform="translate(1066.0 379.0) scale(1.000)"/>
<use href="#creamM" transform="translate(1066.0 428.0) scale(1.000)"/>
<use href="#creamM" transform="translate(1066.0 481.0) scale(1.000)"/>
<use href="#creamM" transform="translate(1066.0 530.0) scale(1.000)"/>
<use href="#creamM" transform="translate(1066.0 579.0) scale(1.000)"/>
<use href="#creamM" transform="translate(1133.0 330.0) scale(1.000)"/>
<use href="#creamM" transform="translate(1133.0 380.0) scale(1.000)"/>
<use href="#creamM" transform="translate(1133.0 530.0) scale(1.000)"/>
<use href="#creamM" transform="translate(1133.0 579.0) scale(1.000)"/>
</g>
<rect x="1043.7" y="346.9" width="45.3" height="157" fill="none" stroke="#d77a35" stroke-width="2.2" stroke-opacity="0.9"/>
<rect x="1110.7" y="351" width="46.1" height="210.3" fill="none" stroke="#d77a35" stroke-width="2.2" stroke-opacity="0.9"/>
<rect x="1177.4" y="307.0" width="134.8" height="216.8" fill="#252a25"/>
<clipPath id="s4b"><rect x="1177.4" y="307" width="134.8" height="216.8"/></clipPath><g clip-path="url(#s4b)">
<use href="#oliveM" transform="translate(1221.0 348.0) scale(1.000)"/>
<use href="#oliveM" transform="translate(1221.0 427.0) scale(1.000)"/>
</g>
<rect x="1179.6" y="310.3" width="47" height="156.7" fill="none" stroke="#d77a35" stroke-width="2.2" stroke-opacity="0.9"/>
<rect x="1262.9" y="310.3" width="47.1" height="211" fill="none" stroke="#d77a35" stroke-width="2.2" stroke-opacity="0.9"/>
<clipPath id="c8"><polygon points="1383.2,247.0 1450.6,247.0 1450.6,676.3 1383.2,676.3"/></clipPath>
<g clip-path="url(#c8)">
<rect x="1383.2" y="247.0" width="67.4" height="429.3" fill="#f8f4ed"/>
<polygon points="1383.2,187.0 1450.6,149.6 1450.6,244.6 1383.2,282.0" fill="#3a8abb"/>
<polygon points="1383.2,318.3 1450.6,280.9 1450.6,385.2 1383.2,422.6" fill="url(#navyPat)"/>
<polygon points="1383.2,414.0 1450.6,376.6 1450.6,385.2 1383.2,422.6" fill="#15406a"/>
<polygon points="1383.2,422.6 1450.6,385.2 1450.6,394.2 1383.2,431.6" fill="#3a8abb"/>
<polygon points="1383.2,470.8 1450.6,433.4 1450.6,675.9 1383.2,713.3" fill="url(#navyPat)"/>
<polygon points="1383.2,676.3 1450.6,638.9 1450.6,718.9 1383.2,756.3" fill="#3a8abb"/>
</g>
<clipPath id="c9"><polygon points="1450.6,247.0 1518.4,247.0 1518.4,676.3 1450.6,676.3"/></clipPath>
<g clip-path="url(#c9)">
<rect x="1450.6" y="247.0" width="67.8" height="429.3" fill="#f8f4ed"/>
<polygon points="1450.6,187.0 1518.4,149.4 1518.4,244.4 1450.6,282.0" fill="#3a8abb"/>
<polygon points="1450.6,318.3 1518.4,280.7 1518.4,385.0 1450.6,422.6" fill="url(#navyPat)"/>
<polygon points="1450.6,414.0 1518.4,376.4 1518.4,385.0 1450.6,422.6" fill="#15406a"/>
<polygon points="1450.6,422.6 1518.4,385.0 1518.4,394.0 1450.6,431.6" fill="#3a8abb"/>
<polygon points="1450.6,470.8 1518.4,433.2 1518.4,675.7 1450.6,713.3" fill="url(#navyPat)"/>
<polygon points="1450.6,676.3 1518.4,638.7 1518.4,718.7 1450.6,756.3" fill="#3a8abb"/>
</g>
<line x1="1450.6" y1="247" x2="1450.6" y2="676" stroke="#6e9ac0" stroke-width="0.6"/>
<rect x="1393.8" y="278" width="46.7" height="157" fill="none" stroke="#d77a35" stroke-width="2.2"/>
<rect x="1393.8" y="465.8" width="46.7" height="211.2" fill="none" stroke="#d77a35" stroke-width="2.2"/>
<rect x="1461.6" y="278" width="46.7" height="157" fill="none" stroke="#d77a35" stroke-width="2.2"/>
<rect x="1461.6" y="465.8" width="46.7" height="211.2" fill="none" stroke="#d77a35" stroke-width="2.2"/>
<text x="1546.0" y="445.0" font-size="6" fill="#000" text-anchor="start" font-weight="bold" stroke="#000" stroke-width="0.35">01-3</text>
<text x="1546.0" y="455.0" font-size="6" fill="#000" text-anchor="start" font-weight="bold" stroke="#000" stroke-width="0.35" textLength="88" lengthAdjust="spacingAndGlyphs">8.75cm×27.8cm のパターン</text>
<clipPath id="c10"><polygon points="1728.0,247.0 1795.5,247.0 1795.5,676.0 1728.0,676.0"/></clipPath>
<g clip-path="url(#c10)">
<rect x="1728.0" y="247.0" width="67.5" height="429.0" fill="#f8f4ed"/>
<polygon points="1728.0,187.0 1795.5,149.5 1795.5,244.5 1728.0,282.0" fill="#f5d2d5"/>
<polygon points="1728.0,318.3 1795.5,280.8 1795.5,385.1 1728.0,422.6" fill="url(#pinkPat)"/>
<polygon points="1728.0,413.0 1795.5,375.5 1795.5,385.1 1728.0,422.6" fill="#dcb4c6"/>
<polygon points="1728.0,422.6 1795.5,385.1 1795.5,394.1 1728.0,431.6" fill="#e6bdd6"/>
<polygon points="1728.0,470.8 1795.5,433.3 1795.5,675.5 1728.0,713.0" fill="url(#pinkPat)"/>
</g>
<clipPath id="c11"><polygon points="1795.5,247.0 1863.0,247.0 1863.0,676.0 1795.5,676.0"/></clipPath>
<g clip-path="url(#c11)">
<rect x="1795.5" y="247.0" width="67.5" height="429.0" fill="#f8f4ed"/>
<polygon points="1795.5,187.0 1863.0,149.5 1863.0,244.5 1795.5,282.0" fill="#f5d2d5"/>
<polygon points="1795.5,318.3 1863.0,280.8 1863.0,385.1 1795.5,422.6" fill="url(#pinkPat)"/>
<polygon points="1795.5,413.0 1863.0,375.5 1863.0,385.1 1795.5,422.6" fill="#dcb4c6"/>
<polygon points="1795.5,422.6 1863.0,385.1 1863.0,394.1 1795.5,431.6" fill="#e6bdd6"/>
<polygon points="1795.5,470.8 1863.0,433.3 1863.0,675.5 1795.5,713.0" fill="url(#pinkPat)"/>
</g>
<rect x="1738.7" y="278.4" width="46.1" height="157" fill="none" stroke="#d77a35" stroke-width="2.2" stroke-opacity="0.9"/>
<rect x="1738.7" y="465.6" width="46.6" height="211" fill="none" stroke="#d77a35" stroke-width="2.2" stroke-opacity="0.9"/>
<rect x="1798.8" y="270.3" width="46.1" height="172" fill="none" stroke="#d77a35" stroke-width="2.2" stroke-opacity="0.9"/>
<rect x="1017.6" y="768.4" width="145.7" height="409.6" fill="none" stroke="#7a4646" stroke-width="5" opacity="0.55"/>
<rect x="1017.6" y="768.4" width="145.7" height="409.6" fill="none" stroke="#863838" stroke-width="1.8"/>
<rect x="1020.8" y="771.6" width="139.3" height="403.2" fill="none" stroke="#585858" stroke-width="2.2" opacity="0.7"/>
<rect x="1022.4" y="773.2" width="136.1" height="400.0" fill="#ebe7e2"/>
<clipPath id="la1"><rect x="1022.4" y="773.2" width="136.1" height="400"/></clipPath><g clip-path="url(#la1)">
<use href="#creamM" transform="translate(1055.9 797.5) scale(1.000)"/>
<use href="#creamM" transform="translate(1055.9 846.8) scale(1.000)"/>
<use href="#creamM" transform="translate(1055.9 896.0) scale(1.000)"/>
<use href="#creamM" transform="translate(1055.9 945.3) scale(1.000)"/>
<use href="#creamM" transform="translate(1055.9 994.6) scale(1.000)"/>
<use href="#creamM" transform="translate(1123.8 797.5) scale(1.000)"/>
<use href="#creamM" transform="translate(1123.8 846.8) scale(1.000)"/>
<use href="#creamM" transform="translate(1123.8 1004.0) scale(1.000)"/>
</g>
<rect x="1177.0" y="768.4" width="145.1" height="409.6" fill="none" stroke="#7a4646" stroke-width="5" opacity="0.55"/>
<rect x="1177.0" y="768.4" width="145.1" height="409.6" fill="none" stroke="#863838" stroke-width="1.8"/>
<rect x="1180.2" y="771.6" width="138.7" height="403.2" fill="none" stroke="#585858" stroke-width="2.2" opacity="0.7"/>
<rect x="1181.8" y="773.2" width="135.5" height="400.0" fill="#252a25"/>
<rect x="1182.3" y="773.7" width="134.5" height="400" fill="none" stroke="#b9b9b9" stroke-width="1"/>
<use href="#oliveM" transform="translate(1224.7 813.7) scale(1.000)"/>
<use href="#oliveM" transform="translate(1224.7 894.4) scale(1.000)"/>
<rect x="1334.9" y="768.4" width="145.5" height="409.6" fill="none" stroke="#7a4646" stroke-width="5" opacity="0.55"/>
<rect x="1334.9" y="768.4" width="145.5" height="409.6" fill="none" stroke="#863838" stroke-width="1.8"/>
<rect x="1338.1" y="771.6" width="139.1" height="403.2" fill="none" stroke="#585858" stroke-width="2.2" opacity="0.7"/>
<rect x="1339.7" y="773.2" width="135.9" height="400.0" fill="#ffffff"/>
<clipPath id="c12"><polygon points="1340.0,773.2 1407.8,773.2 1407.8,1200.0 1340.0,1200.0"/></clipPath>
<g clip-path="url(#c12)">
<rect x="1340.0" y="773.2" width="67.8" height="426.8" fill="#f8f4ed"/>
<polygon points="1340.0,713.2 1407.8,675.6 1407.8,770.6 1340.0,808.2" fill="#3a8abb"/>
<polygon points="1340.0,844.5 1407.8,806.9 1407.8,911.2 1340.0,948.8" fill="url(#navyPat)"/>
<polygon points="1340.0,940.2 1407.8,902.6 1407.8,911.2 1340.0,948.8" fill="#15406a"/>
<polygon points="1340.0,948.8 1407.8,911.2 1407.8,920.2 1340.0,957.8" fill="#3a8abb"/>
<polygon points="1340.0,997.0 1407.8,959.4 1407.8,1199.4 1340.0,1237.0" fill="url(#navyPat)"/>
<polygon points="1340.0,1200.0 1407.8,1162.4 1407.8,1242.4 1340.0,1280.0" fill="#3a8abb"/>
</g>
<clipPath id="c13"><polygon points="1407.8,773.2 1475.6,773.2 1475.6,1200.0 1407.8,1200.0"/></clipPath>
<g clip-path="url(#c13)">
<rect x="1407.8" y="773.2" width="67.8" height="426.8" fill="#f8f4ed"/>
<polygon points="1407.8,713.2 1475.6,675.6 1475.6,770.6 1407.8,808.2" fill="#3a8abb"/>
<polygon points="1407.8,844.5 1475.6,806.9 1475.6,911.2 1407.8,948.8" fill="url(#navyPat)"/>
<polygon points="1407.8,940.2 1475.6,902.6 1475.6,911.2 1407.8,948.8" fill="#15406a"/>
<polygon points="1407.8,948.8 1475.6,911.2 1475.6,920.2 1407.8,957.8" fill="#3a8abb"/>
<polygon points="1407.8,997.0 1475.6,959.4 1475.6,1199.4 1407.8,1237.0" fill="url(#navyPat)"/>
<polygon points="1407.8,1200.0 1475.6,1162.4 1475.6,1242.4 1407.8,1280.0" fill="#3a8abb"/>
</g>
<rect x="1340" y="773.5" width="135.6" height="400" fill="none" stroke="#9fb8c8" stroke-width="0.8"/>
<line x1="1340" y1="855.6" x2="1475" y2="855.6" stroke="#7fa9cc" stroke-width="0.7" stroke-dasharray="4 3"/>
<line x1="1430.4" y1="830" x2="1430.4" y2="925" stroke="#7fa9cc" stroke-width="0.7" stroke-dasharray="4 3"/>
<rect x="1493.4" y="768.4" width="144.6" height="409.6" fill="none" stroke="#7a4646" stroke-width="5" opacity="0.55"/>
<rect x="1493.4" y="768.4" width="144.6" height="409.6" fill="none" stroke="#863838" stroke-width="1.8"/>
<rect x="1496.6" y="771.6" width="138.2" height="403.2" fill="none" stroke="#585858" stroke-width="2.2" opacity="0.7"/>
<rect x="1498.2" y="773.2" width="135.0" height="400.0" fill="#ffffff"/>
<clipPath id="c14"><polygon points="1498.2,773.2 1565.7,773.2 1565.7,1200.0 1498.2,1200.0"/></clipPath>
<g clip-path="url(#c14)">
<rect x="1498.2" y="773.2" width="67.5" height="426.8" fill="#f8f4ed"/>
<polygon points="1498.2,713.2 1565.7,675.7 1565.7,770.7 1498.2,808.2" fill="#f5d2d5"/>
<polygon points="1498.2,844.5 1565.7,807.0 1565.7,911.3 1498.2,948.8" fill="url(#pinkPat)"/>
<polygon points="1498.2,939.2 1565.7,901.7 1565.7,911.3 1498.2,948.8" fill="#dcb4c6"/>
<polygon points="1498.2,948.8 1565.7,911.3 1565.7,920.3 1498.2,957.8" fill="#e6bdd6"/>
<polygon points="1498.2,997.0 1565.7,959.5 1565.7,1199.5 1498.2,1237.0" fill="url(#pinkPat)"/>
</g>
<clipPath id="c15"><polygon points="1565.7,773.2 1633.2,773.2 1633.2,1200.0 1565.7,1200.0"/></clipPath>
<g clip-path="url(#c15)">
<rect x="1565.7" y="773.2" width="67.5" height="426.8" fill="#f8f4ed"/>
<polygon points="1565.7,713.2 1633.2,675.7 1633.2,770.7 1565.7,808.2" fill="#f5d2d5"/>
<polygon points="1565.7,844.5 1633.2,807.0 1633.2,911.3 1565.7,948.8" fill="url(#pinkPat)"/>
<polygon points="1565.7,939.2 1633.2,901.7 1633.2,911.3 1565.7,948.8" fill="#dcb4c6"/>
<polygon points="1565.7,948.8 1633.2,911.3 1633.2,920.3 1565.7,957.8" fill="#e6bdd6"/>
<polygon points="1565.7,997.0 1633.2,959.5 1633.2,1199.5 1565.7,1237.0" fill="url(#pinkPat)"/>
</g></svg>
<div class="a" style="left:7px;top:13px;width:20px;height:19px;background:#330000;border-radius:3px;"></div>
<div class="a" style="left:1564px;top:6px;width:56px;height:30px;background:#1473e6;border-radius:15px"></div>
<div class="a" style="left:1819px;top:0;width:101px;height:24px;border-left:1px solid #484848;border-bottom:1px solid #484848;border-radius:0 0 0 3px"></div>
<div class="a" style="left:1852px;top:0px;width:1px;height:24px;background:#484848;"></div>
<div class="a" style="left:1886px;top:0px;width:1px;height:24px;background:#484848;"></div>
<div class="a" style="left:176.5px;top:53px;width:23.5px;height:24px;background:#ffffff;"></div>
<div class="a" style="left:202px;top:53px;width:20.5px;height:24px;background:#4b4b4b;border:1px solid #5a5a5a;border-radius:2px"></div>
<div class="a" style="left:232px;top:53.5px;width:23px;height:23.5px;background:#000000;box-shadow:inset 0 0 0 1.2px #fff"></div>
<div class="a" style="left:257.5px;top:53px;width:20px;height:24px;background:#4b4b4b;border:1px solid #5a5a5a;border-radius:2px"></div>
<div class="a" style="left:328.5px;top:53px;width:21.5px;height:24px;background:#4a4a4a;border-radius:2px"></div>
<div class="a" style="left:351px;top:53px;width:61.5px;height:24px;background:#474747;"></div>
<div class="a" style="left:413.5px;top:53px;width:21.5px;height:24px;background:#4b4b4b;border:1px solid #5a5a5a;border-radius:2px"></div>
<div class="a" style="left:443.5px;top:53px;width:111.5px;height:24px;background:#ececec;"></div>
<div class="a" style="left:556px;top:53px;width:21.5px;height:24px;background:#4b4b4b;border:1px solid #5a5a5a;border-radius:2px"></div>
<div class="a" style="left:586px;top:53px;width:107.5px;height:24px;background:#ececec;"></div>
<div class="a" style="left:695px;top:53px;width:21px;height:24px;background:#4b4b4b;border:1px solid #5a5a5a;border-radius:2px"></div>
<div class="a" style="left:806px;top:53px;width:71.5px;height:24px;background:#474747;"></div>
<div class="a" style="left:878.5px;top:53px;width:21.5px;height:24px;background:#4a4a4a;border-radius:2px"></div>
<div class="a" style="left:988px;top:53px;width:23.5px;height:24px;background:#e6e6e6;"></div>
<div class="a" style="left:1013.5px;top:53px;width:21px;height:24px;background:#4b4b4b;border:1px solid #5a5a5a;border-radius:2px"></div>
<div class="a" style="left:1050.5px;top:52.5px;width:144.5px;height:24.5px;border:1.2px solid #6d6d6d;border-radius:3px"></div>
<div class="a" style="left:1202px;top:52.5px;width:99.5px;height:24.5px;border:1.2px solid #6d6d6d;border-radius:3px"></div>
<div class="a" style="left:11px;top:283px;width:19.5px;height:17px;background:linear-gradient(90deg,#222,#ccc);border:1.6px solid #c9c9c9"></div>
<div class="a" style="left:25.5px;top:429px;width:42px;height:42px;background:#000;border:1.5px solid #e6e6e6"></div>
<div class="a" style="left:36.5px;top:440px;width:20px;height:20px;background:transparent;border:1.5px solid #e6e6e6"></div>
<div class="a" style="left:2.5px;top:405px;width:43.5px;height:44px;background:#ffffff;"></div>
<div class="a" style="left:3px;top:481.5px;width:21.5px;height:22px;background:#2d2d2d;border:1px solid #4a4a4a"></div>
<div class="a" style="left:28px;top:481.5px;width:23.5px;height:22px;background:transparent;border:1px solid #5b5b5b"></div>
<div class="a" style="left:53.5px;top:481.5px;width:22.5px;height:22px;background:transparent;border:1px solid #5b5b5b"></div>
<div class="a" style="left:5.5px;top:485px;width:16px;height:15.5px;background:#ffffff;border:2px solid #000"></div>
<div class="a" style="left:30.5px;top:485px;width:16px;height:15.5px;background:transparent;border:2px solid #000;background:linear-gradient(90deg,#f2f2f2,#111)"></div>
<div class="a" style="left:56px;top:485px;width:16px;height:15.5px;background:#ffffff;border:2px solid #000"></div>
<div class="a" style="left:3px;top:512px;width:21.5px;height:21px;background:#383838;border:1px solid #4a4a4a"></div>
<div class="a" style="left:28px;top:512px;width:23.5px;height:21px;background:transparent;border:1px solid #5b5b5b"></div>
<div class="a" style="left:53.5px;top:512px;width:22.5px;height:21px;background:transparent;border:1px solid #5b5b5b"></div>
<div class="a" style="left:1842px;top:158px;width:21px;height:15.5px;background:linear-gradient(90deg,#2a2a2a,#d8d8d8);border:1.5px solid #c9c9c9"></div>
<div class="a" style="left:1869.5px;top:94px;width:48px;height:66px;background:#535353;border:1px solid #3b3b3b;box-shadow:0 1px 2px rgba(0,0,0,.3)"></div>
<div class="a" style="left:1870.5px;top:95px;width:46px;height:13px;background:#474747;"></div>
<svg class="a" style="left:0;top:0" width="1920" height="1019" viewBox="0 0 1920 1019" font-family="Liberation Sans, sans-serif"><text x="17" y="27.5" font-size="11.5" font-weight="bold" fill="#ff9a00" text-anchor="middle" letter-spacing="-0.3">Ai</text><path d="M45.5 22 L56.5 12 L67.5 22 L64.5 22 L64.5 31.5 L59 31.5 L59 25 L54 25 L54 31.5 L48.5 31.5 L48.5 22Z" fill="#c9c9c9"/><rect x="84.5" y="8" width="1" height="25" fill="#484848"/><text x="107.5" y="26" font-size="16" fill="#d2d2d2" textLength="81.0" lengthAdjust="spacingAndGlyphs">ファイル(F)</text><text x="207.0" y="26" font-size="16" fill="#d2d2d2" textLength="53.0" lengthAdjust="spacingAndGlyphs">編集(E)</text><text x="277.0" y="26" font-size="16" fill="#d2d2d2" textLength="116.0" lengthAdjust="spacingAndGlyphs">オブジェクト(O)</text><text x="412.0" y="26" font-size="16" fill="#d2d2d2" textLength="54.0" lengthAdjust="spacingAndGlyphs">書式(T)</text><text x="483.0" y="26" font-size="16" fill="#d2d2d2" textLength="54.0" lengthAdjust="spacingAndGlyphs">選択(S)</text><text x="553.8" y="26" font-size="16" fill="#d2d2d2" textLength="54.0" lengthAdjust="spacingAndGlyphs">効果(C)</text><text x="626.0" y="26" font-size="16" fill="#d2d2d2" textLength="53.0" lengthAdjust="spacingAndGlyphs">表示(V)</text><text x="697.0" y="26" font-size="16" fill="#d2d2d2" textLength="105.5" lengthAdjust="spacingAndGlyphs">ウィンドウ(W)</text><text x="818.8" y="26" font-size="16" fill="#d2d2d2" textLength="71.0" lengthAdjust="spacingAndGlyphs">ヘルプ(H)</text><rect x="905" y="8" width="1" height="25" fill="#484848"/><text x="1592" y="26.5" font-size="15" font-weight="bold" fill="#ffffff" text-anchor="middle">共有</text><path d="M1636 28 Q1638 26 1638 20 Q1638 13 1643.5 12.5 Q1649 13 1649 20 Q1649 26 1651.5 28Z" fill="#c9c9c9"/><circle cx="1643.5" cy="30" r="2.2" fill="#c9c9c9"/><circle cx="1643.5" cy="12" r="1.3" fill="#c9c9c9"/><circle cx="1681" cy="20" r="7" fill="none" stroke="#c9c9c9" stroke-width="2.4"/><path d="M1686 25.5 L1692.5 32" stroke="#c9c9c9" stroke-width="3" stroke-linecap="round"/><rect x="1711" y="9" width="1" height="24" fill="#4a4a4a"/><rect x="1737.5" y="16" width="9" height="14" fill="#c9c9c9"/><rect x="1748" y="16" width="11" height="6" fill="#c9c9c9"/><rect x="1748" y="23.5" width="11" height="6.5" fill="#c9c9c9"/><rect x="1782" y="14.5" width="19.5" height="15.5" fill="none" stroke="#c9c9c9" stroke-width="1.8"/><rect x="1784.5" y="17" width="1.5" height="9" fill="#c9c9c9"/><rect x="1827.5" y="14.5" width="13.5" height="3" fill="#c9c9c9"/><rect x="1863.5" y="9.5" width="12" height="8" fill="none" stroke="#c9c9c9" stroke-width="2.2"/><path d="M1898 9 L1910.5 18.5 M1910.5 9 L1898 18.5" stroke="#c9c9c9" stroke-width="2.2"/><text x="13" y="71" font-size="15" fill="#cdcdcd" textLength="59.5" lengthAdjust="spacingAndGlyphs">選択なし</text><path d="M207.7 62.7 L212.2 67.3 L216.8 62.7" fill="none" stroke="#e8e8e8" stroke-width="2" stroke-linecap="round" stroke-linejoin="round"/><rect x="239.3" y="61.3" width="8.4" height="8.4" fill="none" stroke="#fff" stroke-width="1.3"/><rect x="241.2" y="63.2" width="4.6" height="4.6" fill="#eeeeee"/><path d="M262.9 62.7 L267.5 67.3 L272.1 62.7" fill="none" stroke="#e8e8e8" stroke-width="2" stroke-linecap="round" stroke-linejoin="round"/><text x="293.5" y="71" font-size="15" fill="#cdcdcd" textLength="27.5" lengthAdjust="spacingAndGlyphs">線：</text><line x1="294" y1="74.5" x2="321" y2="74.5" stroke="#bdbdbd" stroke-width="1" stroke-dasharray="1.2 1.3"/><path d="M335.0 61.8 L339.5 57.2 L344.0 61.8" fill="none" stroke="#d0d0d0" stroke-width="1.6" stroke-linecap="round" stroke-linejoin="round"/><path d="M335.0 68.2 L339.5 72.8 L344.0 68.2" fill="none" stroke="#d0d0d0" stroke-width="1.6" stroke-linecap="round" stroke-linejoin="round"/><text x="355.5" y="71.5" font-size="15" fill="#d6d6d6">1 px</text><path d="M419.6 62.7 L424.2 67.3 L428.9 62.7" fill="none" stroke="#e8e8e8" stroke-width="2" stroke-linecap="round" stroke-linejoin="round"/><rect x="452" y="63.5" width="63" height="3.5" fill="#111"/><text x="521" y="72" font-size="15" fill="#222" textLength="30" lengthAdjust="spacingAndGlyphs">均等</text><path d="M562.1 62.7 L566.8 67.3 L571.4 62.7" fill="none" stroke="#e8e8e8" stroke-width="2" stroke-linecap="round" stroke-linejoin="round"/><circle cx="599" cy="65.5" r="3" fill="#111"/><text x="616.5" y="72" font-size="15" fill="#222" textLength="70" lengthAdjust="spacingAndGlyphs">5 pt. 丸筆</text><path d="M700.9 62.7 L705.5 67.3 L710.1 62.7" fill="none" stroke="#e8e8e8" stroke-width="2" stroke-linecap="round" stroke-linejoin="round"/><text x="726" y="71" font-size="15" fill="#cdcdcd" textLength="72" lengthAdjust="spacingAndGlyphs">不透明度：</text><line x1="727" y1="74.5" x2="798" y2="74.5" stroke="#bdbdbd" stroke-width="1" stroke-dasharray="1.2 1.3"/><text x="810" y="72" font-size="15" fill="#d6d6d6" textLength="41" lengthAdjust="spacingAndGlyphs">100%</text><path d="M886.5 60.0 L891.5 65.0 L886.5 70.0" fill="none" stroke="#d0d0d0" stroke-width="1.8" stroke-linecap="round" stroke-linejoin="round"/><text x="907.5" y="71" font-size="15" fill="#cdcdcd" textLength="71" lengthAdjust="spacingAndGlyphs">スタイル：</text><path d="M1019.4 62.7 L1024.0 67.3 L1028.6 62.7" fill="none" stroke="#e8e8e8" stroke-width="2" stroke-linecap="round" stroke-linejoin="round"/><rect x="1042" y="48" width="1" height="35" fill="#4a4a4a"/><text x="1122.7" y="71" font-size="15" fill="#dedede" text-anchor="middle" textLength="118" lengthAdjust="spacingAndGlyphs">ドキュメント設定</text><text x="1251.7" y="71" font-size="15" fill="#dedede" text-anchor="middle" textLength="59" lengthAdjust="spacingAndGlyphs">環境設定</text><rect x="1315.5" y="62" width="6" height="7.5" fill="none" stroke="#c9c9c9" stroke-width="1.6"/><rect x="1325.5" y="56" width="8" height="8" fill="none" stroke="#c9c9c9" stroke-width="1.6"/><path d="M1314 61 l1.5 1.5 M1314 70.5 l1.5 -1.5 M1324.5 55 l1.5 1.5 M1334.5 55 l-1.5 1.5 M1334.5 65 l-1.5 -1.5" stroke="#c9c9c9" stroke-width="1.2"/><path d="M1323 60 L1333 71.5 L1323 76.2Z" fill="#c9c9c9" stroke="#535353" stroke-width="0.6"/><path d="M1343.5 62.5 L1347.5 66.5 L1351.5 62.5" fill="none" stroke="#e0e0e0" stroke-width="1.8" stroke-linecap="round" stroke-linejoin="round"/><rect x="1361" y="48" width="1" height="35" fill="#4a4a4a"/><path d="M1384.5 62 V72.5 Q1384.5 75 1387 75 H1398 Q1400.5 75 1400.5 72.5 V64" fill="none" stroke="#c9c9c9" stroke-width="2.4"/><path d="M1399.5 53 L1401 57.5 L1405 59 L1401 60.5 L1399.5 65 L1398 60.5 L1394 59 L1398 57.5Z" fill="#c9c9c9"/><path d="M1392.5 64 L1393.5 67 L1396.5 68 L1393.5 69 L1392.5 72 L1391.5 69 L1388.5 68 L1391.5 67Z" fill="#c9c9c9"/><circle cx="1385.3" cy="58.2" r="5.3" fill="#2a4f78"/><circle cx="1385.3" cy="58.2" r="4.2" fill="#2e8df0"/><rect x="1796.5" y="57.5" width="5" height="5" fill="#7c7c7c"/><rect x="1806.0" y="57.5" width="5" height="5" fill="#7c7c7c"/><rect x="1796.5" y="66.5" width="5" height="5" fill="#7c7c7c"/><rect x="1806.0" y="66.5" width="5" height="5" fill="#7c7c7c"/><path d="M1794 64.5 H1814 M1804 56 V73" stroke="#5f5f5f" stroke-width="0.8"/><rect x="1828" y="56" width="4.5" height="5" fill="#c9c9c9"/><rect x="1828" y="63" width="4.5" height="5" fill="#c9c9c9"/><rect x="1828" y="70" width="4.5" height="5" fill="#c9c9c9"/><path d="M1835 61 H1842 A3.8 3.8 0 0 1 1842 68.6 H1835" fill="none" stroke="#c9c9c9" stroke-width="3.2"/><path d="M1856.0 62.5 L1860.0 66.5 L1864.0 62.5" fill="none" stroke="#777777" stroke-width="1.4" stroke-linecap="round" stroke-linejoin="round"/><rect x="1889" y="60.5" width="3" height="2.5" fill="#c9c9c9"/><rect x="1894" y="60.5" width="10" height="2" fill="#c9c9c9"/><rect x="1889" y="65.5" width="3" height="2.5" fill="#c9c9c9"/><rect x="1894" y="65.5" width="10" height="2" fill="#c9c9c9"/><rect x="1889" y="70.0" width="3" height="2.5" fill="#c9c9c9"/><rect x="1894" y="70.0" width="10" height="2" fill="#c9c9c9"/><text x="98.5" y="110" font-size="14" fill="#e2e2e2" textLength="301.5" lengthAdjust="spacingAndGlyphs">柄データ作成.ai* @ 25 % (CMYK/CPU プレビュー)</text><path d="M420.5 100 L429 108.5 M429 100 L420.5 108.5" stroke="#e6e6e6" stroke-width="2"/><path d="M778.7 129.5 L778.7 145.3 L782.6 141.8 L785.6 147.6 L788 146.4 L785.2 140.8 L789.6 140.6Z" fill="#fff" stroke="#000" stroke-width="1.1" stroke-linejoin="round"/><path d="M8.5 91.5 L5 94 L8.5 96.5 M12.5 91.5 L9 94 L12.5 96.5" fill="none" stroke="#cfcfcf" stroke-width="1.2"/><rect x="27.0" y="106.0" width="1" height="5" fill="#2f2f2f"/><rect x="30.0" y="106.0" width="1" height="5" fill="#2f2f2f"/><rect x="33.0" y="106.0" width="1" height="5" fill="#2f2f2f"/><rect x="36.0" y="106.0" width="1" height="5" fill="#2f2f2f"/><rect x="39.0" y="106.0" width="1" height="5" fill="#2f2f2f"/><rect x="42.0" y="106.0" width="1" height="5" fill="#2f2f2f"/><rect x="45.0" y="106.0" width="1" height="5" fill="#2f2f2f"/><rect x="48.0" y="106.0" width="1" height="5" fill="#2f2f2f"/><path d="M15.5 132.5 L29 146.5 L22.5 147 L15.5 152.5 Z" fill="none" stroke="#c9c9c9" stroke-width="1.6" stroke-linejoin="round"/><path d="M51.5 131 L67.5 147 L59.5 147 L51.5 153 Z" fill="#c9c9c9"/><path d="M74.0 154.0 L74.0 149.0 L69.0 154.0 Z" fill="#c9c9c9"/><g transform="translate(10.5 161.5)"><path d="M0.5 20.5 L3 11 L10 5.5 L16 11.5 L10.5 18.5 Z" fill="#c9c9c9"/><path d="M0.8 20.2 L6.5 14.5" stroke="#535353" stroke-width="1.3"/><circle cx="7" cy="14" r="1.4" fill="#535353"/><rect x="10.5" y="0.5" width="7.5" height="6" rx="1.2" transform="rotate(45 14.25 3.5)" fill="#c9c9c9"/></g><path d="M32.5 183.0 L32.5 178.0 L27.5 183.0 Z" fill="#c9c9c9"/><g transform="translate(49.5 161.5)"><path d="M0.5 20.5 L3 11 L10 5.5 L16 11.5 L10.5 18.5 Z" fill="#c9c9c9"/><path d="M0.8 20.2 L6.5 14.5" stroke="#535353" stroke-width="1.3"/><circle cx="7" cy="14" r="1.4" fill="#535353"/><rect x="10.5" y="0.5" width="7.5" height="6" rx="1.2" transform="rotate(45 14.25 3.5)" fill="#c9c9c9"/></g><path d="M54 165 q-5 -1 -6 3 q-1 4 2 7 q3 3 0 6" fill="none" stroke="#c9c9c9" stroke-width="1.3"/><rect x="11.5" y="192.5" width="19" height="17" fill="#6a6a6a" stroke="#c9c9c9" stroke-width="1.6"/><path d="M35.0 211.0 L35.0 206.0 L30.0 211.0 Z" fill="#c9c9c9"/><path d="M66 190 L69 193 L60 203 L57 200Z" fill="#c9c9c9"/><path d="M56 201 Q51 201 50 206 Q49 209 47 210 Q53 212 57 208 Q59 205 58 203Z" fill="#c9c9c9"/><path d="M74.0 211.0 L74.0 206.0 L69.0 211.0 Z" fill="#c9c9c9"/><path d="M12 223 H29 V227 H27 V225.5 H22.5 V238 H25 V240.5 H16 V238 H18.5 V225.5 H14 V227 H12Z" fill="#c9c9c9"/><path d="M35.0 241.0 L35.0 236.0 L30.0 241.0 Z" fill="#c9c9c9"/><path d="M50.5 227 A9 8.5 0 0 1 66.5 231" fill="none" stroke="#c9c9c9" stroke-width="2"/><path d="M66.5 232 A9 8.5 0 0 1 49 236" fill="none" stroke="#c9c9c9" stroke-width="1.6" stroke-dasharray="1.6 1.6"/><path d="M47 222.5 L54 226 L48.5 231Z" fill="#c9c9c9"/><path d="M74.0 241.0 L74.0 236.0 L69.0 241.0 Z" fill="#c9c9c9"/><path d="M26.7 251.7 L31.9 261 L17.5 271.3 L10.3 263Z" fill="#c9c9c9"/><path d="M10.8 263 L15 258.8 L22 267 L17.5 270.8Z" fill="#535353" stroke="#c9c9c9" stroke-width="1.5" stroke-linejoin="round"/><path d="M35.0 271.0 L35.0 266.0 L30.0 271.0 Z" fill="#c9c9c9"/><ellipse cx="55" cy="260" rx="9" ry="6.5" fill="none" stroke="#c9c9c9" stroke-width="1.4"/><path d="M48 260 H60" stroke="#c9c9c9" stroke-width="1" stroke-dasharray="1.5 1.5"/><path d="M60 258 L71 268 L65 268 L62 273Z" fill="#c9c9c9"/><path d="M35.0 301.0 L35.0 296.0 L30.0 301.0 Z" fill="#c9c9c9"/><path d="M49 297 L68 285 M51 294 L55 300 M62 282 L66 288" stroke="#c9c9c9" stroke-width="1.5"/><path d="M52 294 L65 286" stroke="#c9c9c9" stroke-width="3"/><path d="M12 330 L24 318 L27 321 L15 333 L12 333Z" fill="none" stroke="#c9c9c9" stroke-width="1.5"/><path d="M23 315 L28 310 Q31 308 33 311 Q34 313 32 315 L27 320Z" fill="#c9c9c9"/><path d="M49 318 Q53 312 57 316 Q60 321 65 315 Q69 312 70 318 Q66 322 62 322 L65 327 Q59 326 56 321 L52 328 Q50 322 49 318Z" fill="#c9c9c9"/><rect x="10" y="343" width="8" height="8" fill="#c9c9c9"/><circle cx="21" cy="350" r="5" fill="#8a8a8a"/><circle cx="26.5" cy="353" r="4" fill="none" stroke="#c9c9c9" stroke-width="1.4"/><path d="M49 346 H56 M52.5 341 V350" stroke="#c9c9c9" stroke-width="1.3"/><path d="M55 348 H63 L67 352 V360 H55Z" fill="#8a8a8a" stroke="#c9c9c9" stroke-width="1.3"/><path d="M11 371 Q13 381 11 391" fill="none" stroke="#c9c9c9" stroke-width="1.5"/><rect x="15" y="373" width="8" height="6" fill="#c9c9c9"/><rect x="16" y="382" width="13" height="6" fill="#c9c9c9"/><circle cx="55" cy="379" r="6.5" fill="none" stroke="#c9c9c9" stroke-width="2"/><path d="M59.5 384 L66 390.5" stroke="#c9c9c9" stroke-width="2.5"/><path d="M73.5 393.0 L73.5 388.0 L68.5 393.0 Z" fill="#c9c9c9"/><rect x="2" y="398" width="79" height="1" fill="#474747"/><path d="M60 412.5 Q67 412.5 67.5 420" fill="none" stroke="#c9c9c9" stroke-width="2"/><path d="M61 409 L57 412.5 L61 416Z" fill="#c9c9c9"/><path d="M64 419.5 L67.5 423.5 L71 419.5Z" fill="#c9c9c9"/><rect x="3.5" y="458" width="9" height="9" fill="#fff" stroke="#222" stroke-width="1.2"/><rect x="7" y="462" width="9" height="9" fill="#111" stroke="#ddd" stroke-width="1.2"/><path d="M57.5 499 L70.5 486.5" stroke="#d8232a" stroke-width="2.8"/><circle cx="12" cy="521.5" r="4.8" fill="#8a8a8a" stroke="#cfcfcf" stroke-width="1.2"/><rect x="13" y="523" width="7" height="6.5" fill="#cfcfcf"/><circle cx="37" cy="521.5" r="4.8" fill="#7a7a7a" stroke="#cfcfcf" stroke-width="1.2"/><rect x="38" y="523" width="7" height="6.5" fill="#cfcfcf"/><circle cx="63" cy="523" r="5" fill="none" stroke="#6b6b6b" stroke-width="1.3"/><rect x="26.5" y="550" width="14" height="10" fill="#8a8a8a" stroke="#c9c9c9" stroke-width="1.2"/><rect x="35" y="545" width="17" height="12" fill="#8a8a8a" stroke="#c9c9c9" stroke-width="1.2"/><circle cx="32" cy="595.5" r="2.3" fill="#c9c9c9"/><circle cx="39" cy="595.5" r="2.3" fill="#c9c9c9"/><circle cx="46" cy="595.5" r="2.3" fill="#c9c9c9"/><rect x="0" y="615" width="83" height="1" fill="#3f3f3f"/><path d="M1810.5 135.8 L1815.0 131.2 L1819.5 135.8" fill="none" stroke="#bdbdbd" stroke-width="1.6" stroke-linecap="round" stroke-linejoin="round"/><path d="M1810.5 1002.8 L1815.0 1007.2 L1819.5 1002.8" fill="none" stroke="#bdbdbd" stroke-width="1.6" stroke-linecap="round" stroke-linejoin="round"/><circle cx="101.5" cy="1000.5" r="9.5" fill="#cfcfcf"/><text x="101.5" y="1006" font-size="14" font-weight="bold" fill="#555" text-anchor="middle">?</text><text x="123" y="1005" font-size="13.5" fill="#d2d2d2" stroke="#d2d2d2" stroke-width="0.2" textLength="907" lengthAdjust="spacingAndGlyphs">選択するオブジェクトをクリック ｜ <tspan font-weight="bold">Shift</tspan> キーを押しながらクリックして複数のオブジェクトを選択 ｜ 複製するオブジェクトを <tspan font-weight="bold">Alt</tspan> キーを押しながらドラッグ</text><path d="M1865 90.5 L1861.5 93.5 L1865 96.5 M1869 90.5 L1865.5 93.5 L1869 96.5" fill="none" stroke="#cfcfcf" stroke-width="1.2"/><rect x="1840.0" y="106.0" width="1" height="5" fill="#2f2f2f"/><rect x="1843.0" y="106.0" width="1" height="5" fill="#2f2f2f"/><rect x="1846.0" y="106.0" width="1" height="5" fill="#2f2f2f"/><rect x="1849.0" y="106.0" width="1" height="5" fill="#2f2f2f"/><rect x="1852.0" y="106.0" width="1" height="5" fill="#2f2f2f"/><rect x="1855.0" y="106.0" width="1" height="5" fill="#2f2f2f"/><rect x="1858.0" y="106.0" width="1" height="5" fill="#2f2f2f"/><rect x="1861.0" y="106.0" width="1" height="5" fill="#2f2f2f"/><path d="M1841 131 Q1841 122 1852 121 Q1864 121 1864 128 Q1864 133 1859 133 Q1855 133 1855 137 Q1853 140 1848 140 Q1841 139 1841 131Z" fill="#c9c9c9"/><circle cx="1846" cy="133.5" r="1.8" fill="#535353"/><circle cx="1851" cy="135.5" r="1.8" fill="#535353"/><circle cx="1857" cy="128" r="1.6" fill="#535353"/><circle cx="1860.5" cy="126" r="1.3" fill="#535353"/><circle cx="1849" cy="198" r="6.5" fill="#c9c9c9"/><circle cx="1854.5" cy="204" r="7" fill="#8a8a8a" stroke="#c9c9c9" stroke-width="1.3"/><rect x="1842.5" y="230.5" width="19.5" height="13" fill="#8a8a8a" stroke="#c9c9c9" stroke-width="1.3"/><path d="M1842.5 237 H1862 M1849 230.5 V243.5 M1855.5 230.5 V243.5" stroke="#c9c9c9" stroke-width="1"/><rect x="1828" y="257" width="47" height="1" fill="#3a3a3a"/><rect x="1840.0" y="262.5" width="1" height="5" fill="#2f2f2f"/><rect x="1843.0" y="262.5" width="1" height="5" fill="#2f2f2f"/><rect x="1846.0" y="262.5" width="1" height="5" fill="#2f2f2f"/><rect x="1849.0" y="262.5" width="1" height="5" fill="#2f2f2f"/><rect x="1852.0" y="262.5" width="1" height="5" fill="#2f2f2f"/><rect x="1855.0" y="262.5" width="1" height="5" fill="#2f2f2f"/><rect x="1858.0" y="262.5" width="1" height="5" fill="#2f2f2f"/><rect x="1861.0" y="262.5" width="1" height="5" fill="#2f2f2f"/><rect x="1845" y="281.5" width="15.5" height="15" fill="none" stroke="#c9c9c9" stroke-width="1.2" stroke-dasharray="3 2"/><rect x="1843.5" y="280.0" width="4" height="4" fill="#c9c9c9"/><rect x="1850.5" y="280.0" width="4" height="4" fill="#c9c9c9"/><rect x="1857.5" y="280.0" width="4" height="4" fill="#c9c9c9"/><rect x="1843.5" y="287.0" width="4" height="4" fill="#c9c9c9"/><rect x="1857.5" y="287.0" width="4" height="4" fill="#c9c9c9"/><rect x="1843.5" y="294.5" width="4" height="4" fill="#c9c9c9"/><rect x="1850.5" y="294.5" width="4" height="4" fill="#c9c9c9"/><rect x="1857.5" y="294.5" width="4" height="4" fill="#c9c9c9"/><rect x="1852" y="288.5" width="1.5" height="1.5" fill="#c9c9c9"/><rect x="1848" y="313.5" width="14" height="14" fill="none" stroke="#c9c9c9" stroke-width="1.4"/><rect x="1842.5" y="322" width="7" height="7" fill="#535353" stroke="#c9c9c9" stroke-width="1.4"/><rect x="1845.5" y="325" width="5" height="5" fill="#8a8a8a" stroke="#c9c9c9" stroke-width="1"/><rect x="1842.5" y="350.5" width="19.5" height="1.8" fill="#c9c9c9"/><rect x="1842.5" y="355" width="19.5" height="2.5" fill="#c9c9c9"/><rect x="1842.5" y="360.5" width="19.5" height="3.5" fill="#c9c9c9"/><rect x="1842.5" y="383.5" width="13" height="12" fill="none" stroke="#c9c9c9" stroke-width="1.4"/><rect x="1846.5" y="388.5" width="14.5" height="12" fill="#535353" stroke="#c9c9c9" stroke-width="1.4"/><rect x="1843" y="418" width="1.3" height="21" fill="#c9c9c9"/><rect x="1846" y="421" width="9" height="6" fill="#c9c9c9"/><rect x="1846" y="430" width="16" height="6" fill="#c9c9c9"/><rect x="1843.5" y="454.5" width="10" height="10" fill="#c9c9c9"/><rect x="1849.5" y="460" width="12" height="12" fill="#c9c9c9" stroke="#535353" stroke-width="1.2"/><rect x="1849.5" y="460" width="4" height="4.5" fill="#8a8a8a"/><circle cx="1852.5" cy="498.5" r="9" fill="none" stroke="#c9c9c9" stroke-width="1" stroke-dasharray="2 1.5"/><circle cx="1852.5" cy="498.5" r="7" fill="#c9c9c9"/><rect x="1828" y="518" width="47" height="1" fill="#3a3a3a"/><rect x="1840.0" y="524.5" width="1" height="5" fill="#2f2f2f"/><rect x="1843.0" y="524.5" width="1" height="5" fill="#2f2f2f"/><rect x="1846.0" y="524.5" width="1" height="5" fill="#2f2f2f"/><rect x="1849.0" y="524.5" width="1" height="5" fill="#2f2f2f"/><rect x="1852.0" y="524.5" width="1" height="5" fill="#2f2f2f"/><rect x="1855.0" y="524.5" width="1" height="5" fill="#2f2f2f"/><rect x="1858.0" y="524.5" width="1" height="5" fill="#2f2f2f"/><rect x="1861.0" y="524.5" width="1" height="5" fill="#2f2f2f"/><rect x="1841.5" y="544.5" width="13.5" height="9" rx="4.5" fill="none" stroke="#c9c9c9" stroke-width="2"/><rect x="1849.5" y="544.5" width="13.5" height="9" rx="4.5" fill="none" stroke="#c9c9c9" stroke-width="2"/><path d="M1850 575.5 H1843 V593 H1861 V585.5" fill="none" stroke="#c9c9c9" stroke-width="2"/><path d="M1852 583 L1862 573 M1856 572.5 H1862.5 V579" fill="none" stroke="#c9c9c9" stroke-width="2"/><rect x="1828" y="605" width="47" height="1" fill="#3a3a3a"/><text x="1894" y="193" font-size="21" fill="#c9c9c9">A</text><rect x="1911" y="172" width="1.4" height="22" fill="#c9c9c9"/><path d="M1893.5 212 L1902.5 207.5 L1911.5 212 V224 L1902.5 228.5 L1893.5 224Z M1893.5 212 L1902.5 216.5 L1911.5 212 M1902.5 216.5 V228.5" fill="none" stroke="#c9c9c9" stroke-width="1.3" stroke-linejoin="round"/><rect x="1878" y="239" width="42" height="1" fill="#3a3a3a"/><path d="M1881 100 L1884 102.5 L1881 105 M1885 100 L1888 102.5 L1885 105" fill="none" stroke="#d0d0d0" stroke-width="1.2"/><path d="M1902.5 97.5 L1909.5 104.5 M1909.5 97.5 L1902.5 104.5" stroke="#cfcfcf" stroke-width="1.6"/><path d="M1910 90.5 L1914 93.5 L1910 96.5" fill="#cfcfcf"/><rect x="1882.0" y="113.0" width="1" height="5" fill="#2f2f2f"/><rect x="1885.0" y="113.0" width="1" height="5" fill="#2f2f2f"/><rect x="1888.0" y="113.0" width="1" height="5" fill="#2f2f2f"/><rect x="1891.0" y="113.0" width="1" height="5" fill="#2f2f2f"/><rect x="1894.0" y="113.0" width="1" height="5" fill="#2f2f2f"/><rect x="1897.0" y="113.0" width="1" height="5" fill="#2f2f2f"/><rect x="1900.0" y="113.0" width="1" height="5" fill="#2f2f2f"/><rect x="1903.0" y="113.0" width="1" height="5" fill="#2f2f2f"/><path d="M1884 132.5 H1904 M1884 138.5 H1904 M1884 144.5 H1904" stroke="#c9c9c9" stroke-width="1.3"/><circle cx="1889.5" cy="132.5" r="2.6" fill="#535353" stroke="#c9c9c9" stroke-width="1.3"/><circle cx="1898.5" cy="138.5" r="2.6" fill="#535353" stroke="#c9c9c9" stroke-width="1.3"/><circle cx="1892.5" cy="144.5" r="2.6" fill="#535353" stroke="#c9c9c9" stroke-width="1.3"/></svg>
</body></html>
